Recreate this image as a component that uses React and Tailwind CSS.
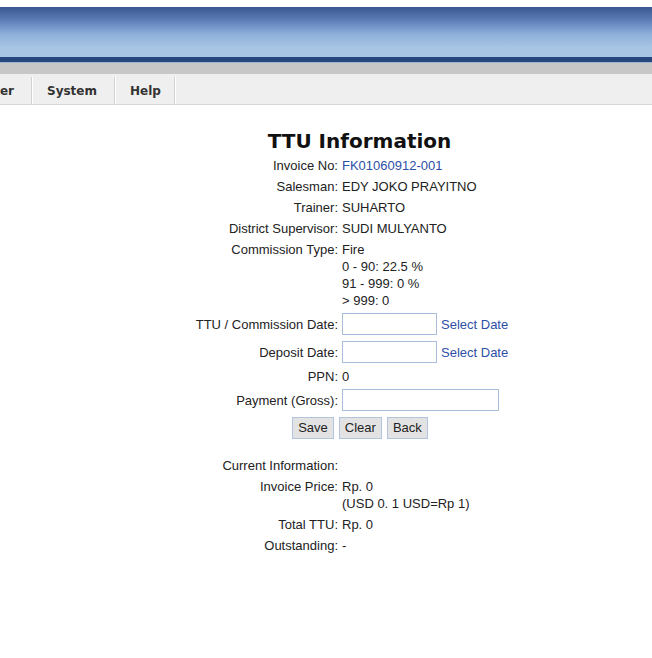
export default function App() {
  const body = "font-['Liberation_Sans',Arial,sans-serif] text-[13px] text-[#222]";

  const Row = ({ label, children, pad = "py-[2px]", input = false }) => (
    <>
      <div className={`text-right leading-[17px] ${pad} ${input ? "flex items-center justify-end" : ""}`}>
        {label}
      </div>
      <div className={`leading-[17px] ${pad} ${input ? "flex items-center" : ""}`}>{children}</div>
    </>
  );

  const tabs = [
    { name: "System", w: "w-[83px]" },
    { name: "Help", w: "w-[60px]" },
  ];

  return (
    <div className="w-[652px] h-[658px] bg-white overflow-hidden">
      {/* banner */}
      <div className="h-[7px] bg-white" />
      <div className="h-[50px] bg-[linear-gradient(180deg,#38568f_0%,#5a7bb5_25%,#8fb0db_55%,#a6c4e3_80%,#a8c6e4_100%)]" />
      <div className="h-[5px] bg-[#26477c]" />
      <div className="h-[1px] bg-[#9fb4d0]" />
      <div className="h-[11px] bg-[#c7c7c7]" />

      {/* menu */}
      <div className="h-[31px] pt-[3px] bg-[#efefef] border-b border-[#d6d6d6] flex font-['DejaVu_Sans',Verdana,sans-serif] font-bold text-[12px] text-[#333]">
        <div className="w-[32px] overflow-hidden flex justify-end items-center pr-[17px] border-r border-[#d2d2d2] whitespace-nowrap">
          Master
        </div>
        {tabs.map((t) => (
          <div
            key={t.name}
            className={`${t.w} flex items-center pl-[14px] border-r border-[#d2d2d2] border-l border-l-white`}
          >
            {t.name}
          </div>
        ))}
        <div className="flex-1 border-l border-l-white" />
      </div>

      {/* content */}
      <div className="pt-[23px]">
        <h1 className="pl-[67px] text-center font-['DejaVu_Sans',Verdana,sans-serif] font-bold text-[20px] leading-[27px] text-[#111]">
          TTU Information
        </h1>

        <div className={`grid grid-cols-[338px_1fr] gap-x-[4px] ${body}`}>
          <Row label="Invoice No:">
            <a className="text-[#2d4fa6]">FK01060912-001</a>
          </Row>
          <Row label="Salesman:">EDY JOKO PRAYITNO</Row>
          <Row label="Trainer:">SUHARTO</Row>
          <Row label="District Supervisor:">SUDI MULYANTO</Row>
          <Row label="Commission Type:">
            <div>Fire</div>
            <div>0 - 90: 22.5 %</div>
            <div>91 - 999: 0 %</div>
            <div>&gt; 999: 0</div>
          </Row>
          <Row label="TTU / Commission Date:" pad="pt-[2px] pb-[4px]" input>
            <input className="w-[95px] h-[22px] border border-[#a9bcd9] bg-white outline-none" />
            <a className="ml-[4px] text-[#2d4fa6]">Select Date</a>
          </Row>
          <Row label="Deposit Date:" pad="pt-[2px] pb-[4px]" input>
            <input className="w-[95px] h-[22px] border border-[#a9bcd9] bg-white outline-none" />
            <a className="ml-[4px] text-[#2d4fa6]">Select Date</a>
          </Row>
          <Row label="PPN:" pad="pt-[1px] pb-[3px]">0</Row>
          <Row label="Payment (Gross):" pad="pt-[1px] pb-[2px]" input>
            <input className="w-[157px] h-[22px] border border-[#a9bcd9] bg-white outline-none" />
          </Row>
        </div>

        <div className={`pl-[68px] pt-[4px] flex justify-center gap-[5px] ${body}`}>
          {["Save", "Clear", "Back"].map((b) => (
            <button
              key={b}
              className="h-[22px] px-[5px] bg-[#e3e3e3] border border-[#b3c4df] text-[13px] text-[#222] leading-[20px]"
            >
              {b}
            </button>
          ))}
        </div>

        <div className={`mt-[16px] grid grid-cols-[338px_1fr] gap-x-[4px] ${body}`}>
          <Row label="Current Information:">{""}</Row>
          <Row label="Invoice Price:">
            <div>Rp. 0</div>
            <div>(USD 0. 1 USD=Rp 1)</div>
          </Row>
          <Row label="Total TTU:">Rp. 0</Row>
          <Row label="Outstanding:">-</Row>
        </div>
      </div>
    </div>
  );
}
